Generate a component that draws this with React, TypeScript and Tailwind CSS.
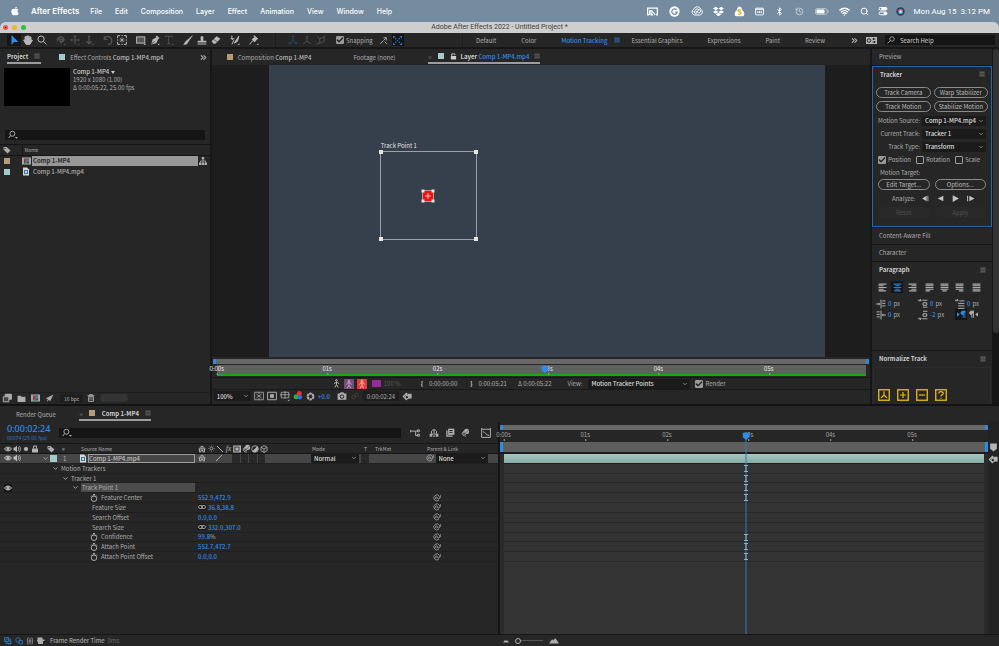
import React, { useState } from 'react';
import { FaApple, FaDropbox } from 'react-icons/fa';
import { Bluetooth, Search, Wifi, History, Check, ChevronDown, ChevronsRight } from 'lucide-react';

interface SvgProps {
  size?: number;
  className?: string;
  children: React.ReactNode;
}

const Svg: React.FC<SvgProps> = ({ size = 10, className = '', children }) => (
  <svg width={size} height={size} viewBox="0 0 16 16" fill="none" stroke="currentColor" strokeWidth={1.6} className={`shrink-0 ${className}`}>
    {children}
  </svg>
);

const MenuLines = ({ className = '' }) => (
  <Svg size={6} className={className}>
    <path d="M1 3h14M1 8h14M1 13h14" strokeWidth={2} />
  </Svg>
);

const FindIcon = () => (
  <Svg size={10}>
    <circle cx="7" cy="6" r="4" />
    <path d="M4 9 1 13" />
    <path d="M11 11h5l-2.500 3z" fill="currentColor" stroke="none" />
  </Svg>
);

const TagIcon = () => (
  <Svg size={8}>
    <path d="M1 2h6l8 7-6 6-8-8z" fill="currentColor" stroke="none" />
    <circle cx="4" cy="5" r="1.300" fill="#262626" stroke="none" />
  </Svg>
);

const EyeIcon = () => (
  <Svg size={8}>
    <path d="M1 8c3-5 11-5 14 0-3 5-11 5-14 0z" strokeWidth={2} />
    <circle cx="8" cy="8" r="2.500" fill="currentColor" />
  </Svg>
);

const SpeakerIcon = () => (
  <Svg size={8}>
    <path d="M1 5h3l4-4v14l-4-4H1z" fill="currentColor" stroke="none" />
    <path d="M10 4c2 2 2 6 0 8M12.500 2c3 3 3 9 0 12" />
  </Svg>
);

const FileIcon = () => (
  <svg width="8" height="9" viewBox="0 0 16 18" className="shrink-0">
    <path d="M2 1h8l4 4v12H2z" fill="#d8d8d8" />
    <path d="M4 6h8v8H4z" fill="#356f96" />
    <circle cx="8" cy="10" r="2.500" fill="#b9dcea" />
  </svg>
);

const CompIcon = () => (
  <svg width="9" height="8" viewBox="0 0 18 16" className="shrink-0">
    <path d="M0 1h18v14H0z" fill="#b4b4b4" />
    <path d="M4 3h10v10H4z" fill="#454545" />
    <path d="M5 4h5v5H5z" fill="#df3131" />
    <circle cx="11.500" cy="7" r="2.500" fill="#3d86d8" />
    <path d="M5 13l3-5 3 5z" fill="#38a35c" />
    <path d="M1 4h2M1 8h2M1 12h2M15 4h2M15 8h2M15 12h2" stroke="#6b6b6b" strokeWidth="1.500" />
  </svg>
);

const StopwatchIcon = () => (
  <Svg size={8}>
    <circle cx="8" cy="9.500" r="5.500" strokeWidth={1.900} />
    <path d="M6 1h4M8 1v3M12 3l2 2M2 5l2-2" strokeWidth={1.900} />
  </Svg>
);

const LinkIcon = () => (
  <svg width="8" height="6" viewBox="0 0 16 12" fill="none" stroke="#9a9a9a" strokeWidth="2" className="shrink-0">
    <rect x="1" y="3" width="8" height="6" rx="3" />
    <rect x="7" y="3" width="8" height="6" rx="3" />
  </svg>
);

const SpiralIcon = () => (
  <Svg size={8}>
    <path d="M12 12a6 6 0 1 1 1-7c1 3 0 6-3 5-2-1 0-4-3-4s-3 4 0 4" strokeWidth={1.500} />
    <path d="M15.300 2v6" strokeWidth={1.300} />
  </Svg>
);

const SyncIcon = () => (
  <Svg size={11}>
    <path d="M7 3 2 8l5 5M7 3v3" strokeWidth={1.800} />
    <path d="M8 4h6v7H8z" fill="currentColor" stroke="none" />
    <circle cx="7" cy="9" r="2.500" fill="#262626" />
  </Svg>
);

const ShyIcon = () => (
  <Svg size={8}>
    <path d="M4 8V5q4-6 8 0v3M1 8h14M3 8v6h3v-3h4v3h3V8M8 3v5" strokeWidth={1.800} />
  </Svg>
);

const BlurIcon = () => (
  <Svg size={9}>
    <circle cx="10" cy="6" r="4.500" fill="currentColor" stroke="none" />
    <path d="M5 5c-2 3 0 7 4 7M2.500 7.500c-1 4 2 7 6 7" />
    <path d="m6 11 8-8" stroke="#262626" strokeWidth={1} />
  </Svg>
);

const Checkbox = ({ label, defaultChecked = false }: { label: string; defaultChecked?: boolean }) => (
  <label className="flex items-center gap-[2px]">
    <span className="relative flex">
      <input
        type="checkbox"
        defaultChecked={defaultChecked}
        className="peer size-2 appearance-none rounded-[1px] border border-[#9a9a9a] checked:bg-[#9a9a9a]"
      />
      <Check size={8} strokeWidth={4} className="pointer-events-none absolute inset-0 hidden text-[#202020] peer-checked:block" />
    </span>
    {label}
  </label>
);

interface DropdownProps {
  label: string;
  options: string[];
  className?: string;
}

const Dropdown: React.FC<DropdownProps> = ({ label, options, className = '' }) => (
  <span className={`relative flex h-[10px] items-center bg-[#1b1b1b] font-medium text-[#dcdcdc] ${className}`}>
    <select aria-label={label} className="h-full w-full appearance-none bg-transparent pl-[3px] outline-none">
      {options.map((option) => (
        <option key={option}>{option}</option>
      ))}
    </select>
    <ChevronDown size={6} strokeWidth={3} className="pointer-events-none absolute right-[2px] text-[#a0a0a0]" />
  </span>
);

const menus = ['File', 'Edit', 'Composition', 'Layer', 'Effect', 'Animation', 'View', 'Window', 'Help'];

const MenuBar = () => (
  <header className="flex h-[22px] items-center bg-[#758ba0] font-['Inter',sans-serif] text-[7px] font-medium text-white">
    <FaApple size={10} className="ml-[10px] mr-[11px]" />
    <nav className="flex items-center gap-[13px]">
      <button className="-mr-[2px] text-[8px] font-semibold">After Effects</button>
      {menus.map((menu) => (
        <button key={menu}>{menu}</button>
      ))}
    </nav>
    <div className="ml-auto flex items-center [&>span]:flex [&>span]:justify-center">
      <span className="w-[22px]">
        <Svg size={11}>
          <path d="M3 13H1V3h14v10h-2M4 13V7h3l5 6" strokeWidth={1.800} />
          <path d="M8 13l-2-3v3z" fill="currentColor" />
        </Svg>
      </span>
      <span className="w-[22px]">
        <Svg size={11}>
          <circle cx="8" cy="8" r="7.500" fill="white" stroke="none" />
          <path d="M11 5.500A4 4 0 1 0 12 9H9" stroke="#758ba0" strokeWidth={1.800} />
        </Svg>
      </span>
      <span className="w-[22px]">
        <svg width="12" height="10" viewBox="0 0 24 20" fill="none" stroke="white" strokeWidth="2">
          <path d="M7 18a6 6 0 0 1-2-11C8 0 17 0 19 6c5 2 5 12-2 12z" />
          <path d="M12 12c-2-4-6-2-6 0s4 4 6 1l2-4c2-3 6-1 5 2s-4 4-6 1M9 8c1-3 6-3 7 0" />
        </svg>
      </span>
      <span className="w-[22px]"><FaDropbox size={11} /></span>
      <span className="w-5">
        <Svg size={11}>
          <path d="M4 6c1-7 7-7 8 0 4 3 4 9 0 9H4c-4 0-4-6 0-9z" fill="white" stroke="none" />
          <path d="M10 6C5 4 5 8 8 8.500s3 4.500-2 3" stroke="#d8b622" strokeWidth={2} />
        </Svg>
      </span>
      <span className="w-5">
        <Svg size={9}>
          <rect x="1" y="2" width="14" height="12" rx="1" />
          <path d="M1 4h14" strokeWidth={2} />
          <path d="M4 9h2M7 9h2M10 9h2" strokeWidth={3} />
        </Svg>
      </span>
      <span className="w-5"><Bluetooth size={9} strokeWidth={2.500} /></span>
      <span className="w-5"><History size={9} strokeWidth={2} className="text-[#d5dce2]" /></span>
      <span className="w-6">
        <svg width="14" height="7" viewBox="0 0 28 14">
          <rect x="1" y="1" width="23" height="12" rx="3" fill="none" stroke="#c7d0d9" strokeWidth="1.500" />
          <rect x="3" y="3" width="16" height="8" rx="1" fill="white" />
          <path d="M26 5v4" stroke="#c7d0d9" strokeWidth="2" />
        </svg>
      </span>
      <span className="w-[22px]"><Wifi size={11} strokeWidth={3} /></span>
      <span className="w-[18px]"><Search size={9} strokeWidth={2.500} /></span>
      <span className="w-[18px]">
        <Svg size={10}>
          <rect x="1" y="1.500" width="14" height="5.500" rx="2.700" fill="white" stroke="none" />
          <circle cx="4" cy="4.200" r="1.600" fill="#758ba0" stroke="none" />
          <rect x="1.800" y="9.500" width="12.500" height="4.500" rx="2.200" />
          <circle cx="11.500" cy="11.800" r="1.800" fill="white" />
        </Svg>
      </span>
      <span className="w-[18px]">
        <Svg size={9}>
          <circle cx="8" cy="8" r="7.500" fill="#31405c" stroke="none" />
          <path d="M3 7c3-5 8-4 10-1-3 4-7 4-10 1z" fill="#e0568c" stroke="none" />
          <path d="M4 10c3 4 7 3 9-1-3-2-6-2-9 1z" fill="#49bfe0" stroke="none" />
          <circle cx="8" cy="8" r="2" fill="white" stroke="none" />
        </Svg>
      </span>
      <time className="ml-1 mr-[9px] whitespace-pre font-['Roboto',sans-serif] text-[8px] font-normal">Mon Aug 15  3:12 PM</time>
    </div>
  </header>
);

interface Tool {
  name: string;
  dim?: boolean;
  icon: React.ReactNode;
}

const corner = <path d="M15 13v3h-3z" fill="currentColor" stroke="none" />;

const toolGroups: Tool[][] = [
  [
    { name: 'Selection', icon: <path d="M4 0v16l4-5h7z" fill="currentColor" stroke="none" /> },
    {
      name: 'Hand',
      icon: <path d="M5 15 1 8c1-1 2 0 3 1L3 3l1.500-.5L6 7V1.500h1.500V7l1-5.500 1.500.3L9.700 7l2-4 1.300.6-1 5 2-1 1 .9-4 6.500z" fill="currentColor" />,
    },
    { name: 'Zoom', icon: <><circle cx="6.500" cy="6.500" r="5" /><path d="m10 10 5 5" /></> },
  ],
  [
    { name: 'Orbit', dim: true, icon: <><path d="M3 10C-1 5 8 1 12 5c3 3-1 7-4 5M5 7h6l-3 5z" strokeWidth={2} />{corner}</> },
    { name: 'Pan', dim: true, icon: <><path d="M8 0v15M1 8h14M6 3l2-2 2 2M3 6 1 8l2 2M13 6l2 2-2 2" />{corner}</> },
    { name: 'Dolly', dim: true, icon: <><path d="M8 1v13M4 10l4 4 4-4M6 2h4" strokeWidth={2} />{corner}</> },
  ],
  [
    { name: 'Rotation', dim: true, icon: <path d="M2 2v5h5M2 6c3-6 12-4 12 3 0 4-3 6-6 6" strokeWidth={2} /> },
    {
      name: 'Pan Behind',
      icon: <><path d="M1 5V1h4M11 1h4v4M15 11v4h-4M5 15H1v-4M7 1h2M7 15h2M1 7v2M15 7v2" /><path d="M8 4v8M4 8h8M5 5l6 6M11 5l-6 6" strokeWidth={1} /></>,
    },
  ],
  [
    { name: 'Rectangle', icon: <><rect x="1" y="3" width="13" height="10" fill="#555" />{corner}</> },
    { name: 'Pen', icon: <><path d="m2 15 2-8 6-3 3 3-3 6z" fill="currentColor" stroke="none" /><path d="m10 2 4 4" strokeWidth={3} /><path d="m2 15 5-5" stroke="#444" />{corner}</> },
    { name: 'Type', dim: true, icon: <><path d="M2 4V2h11v2M7.500 2v12M5 14h5" />{corner}</> },
  ],
  [
    { name: 'Brush', icon: <path d="M15 1 8 11l-2-2zM6 9l2 2c-1 4-4 4-7 4 2-1 2-5 5-6z" fill="currentColor" strokeWidth={1} /> },
    { name: 'Clone Stamp', icon: <path d="M6 7C4 0 12 0 10 7v2h5v3H1V9h5zM1 13.500h14V15H1z" fill="currentColor" stroke="none" /> },
    { name: 'Eraser', icon: <><path d="m1 10 8-8 6 4-8 8H4z" fill="currentColor" stroke="none" /><path d="m4 7 6 4" stroke="#262626" strokeWidth={1} /></> },
  ],
  [
    { name: 'Roto Brush', icon: <><path d="M3 1v5l3 3-3 6M1 6h6" /><path d="m14 2-4 6-3 5 5-3z" fill="currentColor" />{corner}</> },
  ],
  [
    { name: 'Puppet Pin', icon: <><path d="m8 1 6 5-2 1-3 4-4-4 4-3zM6 9l-5 6" fill="currentColor" />{corner}</> },
  ],
];

const workspaces = ['Essential Graphics', 'Expressions', 'Paint', 'Review'];

const Toolbar = () => {
  const [tool, setTool] = useState('Selection');

  return (
    <div className="flex h-4 items-center border-b-2 border-[#161616] bg-[#262626]">
      <div className="ml-[7px] flex gap-[5px]">
        {toolGroups.map((group, index) => (
          <div key={index} className="flex">
            {group.map(({ name, dim, icon }) => (
              <button
                key={name}
                aria-label={name}
                onClick={() => setTool(name)}
                className={`flex h-3 w-[14px] items-center justify-center ${
                  name === tool ? 'bg-[#161616] text-[#2d8ceb]' : dim ? 'text-[#525252]' : 'text-[#b8b8b8]'
                }`}
              >
                <Svg size={10}>{icon}</Svg>
              </button>
            ))}
          </div>
        ))}
      </div>
      <div className="ml-[14px] flex h-full items-center gap-1 border-l border-[#1c1c1c] pl-3 text-[#505050]">
        <Svg size={10} className="text-[#1f4a75]"><path d="M8 1v8l-6 5M8 9l6 5M6 3l2-2 2 2M2 11v3h3M14 11v3h-3" /></Svg>
        <Svg size={10}><path d="M8 2v8l-6 4M8 10l6 4M6 4l2-2 2 2" /></Svg>
        <Svg size={10}><path d="m2 2 4 4v7l7-3V3L6 6M1 14l5-1M13 3l2-2" /></Svg>
      </div>
      <div className="ml-[10px] flex items-center">
        <Checkbox label="Snapping" defaultChecked />
        <Svg size={9} className="ml-[6px]"><path d="m2 14 6-6M8 3h5v5M13 3 8 8M10 10l4 4" /></Svg>
        <span className="ml-1 flex h-3 w-3 items-center justify-center bg-[#151515] text-[#2974bd]">
          <Svg size={9}><path d="M1 4V1h3M12 1h3v3M15 12v3h-3M4 15H1v-3M4 4l2 2M12 4l-2 2M12 12l-2-2M4 12l2-2M7 8h2" strokeWidth={2} /></Svg>
        </span>
      </div>
      <nav className="ml-auto flex h-full items-center gap-[25px] border-l border-[#1c1c1c] pl-[13px]">
        <button>Default</button>
        <button>Color</button>
        <button className="flex items-center gap-[7px] font-medium text-[#2d8ceb]">
          Motion Tracking
          <MenuLines className="-mr-[14px]" />
        </button>
        {workspaces.map((workspace) => (
          <button key={workspace}>{workspace}</button>
        ))}
        <ChevronsRight size={9} strokeWidth={3} />
      </nav>
      <svg width="11" height="7" viewBox="0 0 22 14" className="ml-[7px] shrink-0">
        <path d="M0 0h22v14H0z" fill="#b4b4b4" />
        <circle cx="6" cy="7" r="3.500" fill="none" stroke="#262626" strokeWidth="2" />
        <path d="M13 4h6M13 10h6M15 2v4M17 8v4" stroke="#262626" strokeWidth="2" />
      </svg>
      <label className="ml-2 mr-1 flex h-[10px] w-[110px] items-center bg-[#151515] pl-[2px]">
        <Svg size={8}><circle cx="10" cy="6" r="4.500" /><path d="m7 9-6 6" /></Svg>
        <input aria-label="Search Help" placeholder="Search Help" className="w-full bg-transparent pl-[5px] outline-none placeholder:text-[#d0d0d0]" />
      </label>
    </div>
  );
};

const ProjectPanel = () => (
  <section className="flex w-[21%] flex-col bg-[#262626] pb-px">
    <div className="flex h-4 items-center">
      <button className="ml-[7px] flex h-[14px] items-center gap-[6px] border-b-2 border-[#9c9c9c] font-bold text-[#cfcfcf]">
        Project
        <MenuLines className="mr-px text-[#7c7c7c]" />
      </button>
      <span className="ml-[18px] size-[6px] bg-[#a2cccb]" />
      <button className="ml-[5px] whitespace-nowrap">
        Effect Controls <span className="font-medium text-[#bcbcbc]">Comp 1-MP4.mp4</span>
      </button>
      <ChevronsRight size={9} strokeWidth={3} className="ml-auto mr-[2px] shrink-0" />
    </div>
    <div className="ml-1 mt-[3px] flex h-[38px] gap-[3px]">
      <div className="w-[66px] bg-black" />
      <div className="leading-[8px]">
        <div className="flex items-center gap-[2px] font-medium text-[#cacaca]">
          Comp 1-MP4
          <svg width="4" height="3" viewBox="0 0 4 3" fill="currentColor"><path d="M0 0h4L2 3z" /></svg>
        </div>
        <div>1920 x 1080 (1.00)</div>
        <div>Δ 0:00:05:22, 25.00 fps</div>
      </div>
    </div>
    <label className="mx-[5px] mt-6 flex h-[10px] items-center bg-[#151515] pl-[3px]">
      <FindIcon />
      <input aria-label="Search project" className="w-full bg-transparent outline-none" />
    </label>
    <div className="mt-1 flex-1 border-t border-[#141414]">
      <table className="w-full border-collapse text-left">
        <thead>
          <tr className="h-[10px] border-b border-[#141414] text-[5px]">
            <th className="w-[22px] py-0 pl-[3px]"><TagIcon /></th>
            <th className="border-l border-[#161616] py-0 pl-[2px] font-normal" colSpan={2}>Name</th>
            <th className="w-3 p-0" />
          </tr>
        </thead>
        <tbody>
          <tr className="h-[11px]">
            <td className="p-0 pl-1"><span className="block size-[6px] bg-[#b59c72]" /></td>
            <td className="w-[10px] p-0"><CompIcon /></td>
            <td className="bg-[#989898] py-0 pl-px font-bold text-[#2c2c2c]">Comp 1-MP4</td>
            <td className="p-0 pl-px">
              <Svg size={8}><path d="M5.500 0h5v5h-5zM0 11h5v5H0zM6 11h4v5H6zM11 11h5v5h-5z" fill="currentColor" stroke="none" /><path d="M8 5v6M3 11V8h10v3" /></Svg>
            </td>
          </tr>
          <tr className="h-[11px]">
            <td className="p-0 pl-1"><span className="block size-[6px] bg-[#a2cccb]" /></td>
            <td className="p-0"><FileIcon /></td>
            <td className="py-0 pl-px font-medium">Comp 1-MP4.mp4</td>
            <td className="p-0" />
          </tr>
        </tbody>
      </table>
    </div>
    <div className="flex h-[11px] items-center border-t border-[#1e1e1e] text-[5px] [&>button]:flex [&>button]:w-[14px] [&>button]:justify-center">
      <button aria-label="Interpret footage"><Svg size={10}><path d="M5 2h10v8H5z" fill="#aaa" /><path d="M2 6h9v8H2z" fill="#444" /></Svg></button>
      <button aria-label="New folder"><Svg size={9}><path d="M1 3h6l1 2h7v9H1z" fill="currentColor" stroke="none" /></Svg></button>
      <button aria-label="New composition"><CompIcon /></button>
      <button aria-label="Adjust"><Svg size={9}><path d="M15 1 9 13l-2-3-4 4 2-5-4-1z" fill="currentColor" stroke="none" /></Svg></button>
      <span className="ml-1 bg-[#1e1e1e] px-1 leading-[9px]">16 bpc</span>
      <button aria-label="Delete" className="ml-px"><Svg size={8}><path d="M1 3h14M5 3V1h6v2M3 5h10v10H3zM6 6v7M10 6v7" /></Svg></button>
      <span className="ml-[2px] h-2 w-7 rounded-full bg-[#343434]" />
    </div>
  </section>
);

const DURATION = 5.88;
const PLAYHEAD = 2.97;
const seconds = [0, 1, 2, 3, 4, 5];
const percent = (time: number) => `${(time / DURATION) * 100}%`;

const TimeLabels = ({ className = '' }) => (
  <>
    {seconds.map((second) => (
      <span
        key={second}
        className={`absolute top-0 -translate-x-1/2 leading-[8px] ${className}`}
        style={{ left: percent(second) }}
      >
        {second === 0 ? '0:00s' : `0${second}s`}
        <i className="absolute left-1/2 top-2 h-[2px] w-px bg-[#a0a0a0]" />
      </span>
    ))}
  </>
);

const PlayheadCap = () => (
  <svg width="7" height="8" viewBox="0 0 14 16" className="absolute top-0 -translate-x-1/2" style={{ left: percent(PLAYHEAD) }}>
    <path d="M0 1q7 3 14 0v9l-7 6-7-6z" fill="#2d8ceb" />
  </svg>
);

const NavigatorBar = ({ className = '' }) => (
  <div className={`flex h-[5px] items-stretch justify-between bg-[#686868] ${className}`}>
    <span className="w-[3px] rounded-l-full bg-[#2d8ceb]" />
    <span className="w-[3px] rounded-r-full bg-[#2d8ceb]" />
  </div>
);

const Handles = ({ size }: { size: string }) => (
  <>
    <i className={`absolute left-0 top-0 -translate-1/2 bg-[#e4e4e4] ${size}`} />
    <i className={`absolute left-full top-0 -translate-1/2 bg-[#e4e4e4] ${size}`} />
    <i className={`absolute left-0 top-full -translate-1/2 bg-[#e4e4e4] ${size}`} />
    <i className={`absolute left-full top-full -translate-1/2 bg-[#e4e4e4] ${size}`} />
  </>
);

const TrackPoint = () => (
  <div className="absolute left-[111px] top-[86px] h-[89px] w-[97px] border border-[#9aa1ab]">
    <span className="absolute -top-[10px] left-0 whitespace-nowrap leading-[8px] text-[#e0e0e0]">Track Point 1</span>
    <Handles size="size-1" />
    <div className="absolute left-1/2 top-1/2 flex size-3 -translate-1/2 items-center justify-center border border-[#c58f8f] bg-[#e81414]">
      <svg width="6" height="6" viewBox="0 0 6 6" stroke="#ffb9b9"><path d="M3 0v6M0 3h6" /></svg>
      <Handles size="size-[3px]" />
    </div>
  </div>
);

const Walker = <path d="M8 5v5l-3 5M8 10l3 5M4 9l2-3h4l2 3" />;

const LayerPanel = () => (
  <section className="flex min-w-0 flex-1 flex-col bg-[#262626] pb-[2px]">
    <div className="flex h-4 items-center">
      <span className="ml-[15px] size-[6px] bg-[#b59c72]" />
      <button className="ml-[5px]">Composition <span className="font-medium text-[#b8b8b8]">Comp 1-MP4</span></button>
      <button className="ml-[42px]">Footage (none)</button>
      <div className="ml-[32px] flex h-[14px] items-center border-b-2 border-[#9c9c9c] font-bold text-[#d0d0d0]">
        <button aria-label="Close layer tab" className="text-[5px] font-normal text-[#8c8c8c]">×</button>
        <span className="ml-[5px] size-[6px] bg-[#a2cccb]" />
        <Svg size={7} className="ml-[6px]"><path d="M2 7h12v8H2z" fill="currentColor" stroke="none" /><path d="M4 7V2h7v3" strokeWidth={2} /></Svg>
        <button className="ml-1">Layer <span className="font-medium text-[#2d8ceb]">Comp 1-MP4.mp4</span></button>
        <MenuLines className="ml-[5px] text-[#7c7c7c]" />
      </div>
    </div>
    <div className="flex flex-1 bg-[#1d1d1d] pl-[57px] pr-[45px]">
      <div className="relative flex-1 bg-[#363f4c]">
        <TrackPoint />
      </div>
    </div>
    <div className="h-5 pt-[2px]">
      <NavigatorBar className="mx-[1px]" />
      <div className="relative ml-[5px] mr-1 mt-px h-[9px] bg-[#606060]">
        <TimeLabels className="text-[#eaeaea]" />
        <PlayheadCap />
      </div>
      <div className="ml-[5px] mr-1 h-[2px] bg-[#12a818]" />
    </div>
    <div className="flex h-3 items-center border-t border-[#191919]">
      <div className="ml-[120px] flex items-center gap-[3px]">
        <Svg size={9} className="text-[#c0c0c0]"><circle cx="8" cy="2.500" r="1.500" />{Walker}</Svg>
        <Svg size={10} className="bg-[#6d5070] text-[#d78fdc]"><circle cx="8" cy="3" r="1.500" />{Walker}</Svg>
        <Svg size={10} className="bg-[#e03a36] text-[#f2b0ae]"><circle cx="8" cy="3" r="1.500" />{Walker}</Svg>
        <span className="ml-[2px] h-[7px] w-[9px] bg-[#962a97]" />
        <span className="text-[#5c5c5c]">100 %</span>
      </div>
      <span className="ml-5 font-bold text-[#d0d0d0]">{'{'}</span>
      <button className="ml-[6px]">0:00:00:00</button>
      <span className="ml-[13px] font-bold text-[#d0d0d0]">{'}'}</span>
      <button className="ml-[6px]">0:00:05:21</button>
      <span className="ml-[11px] whitespace-nowrap">Δ 0:00:05:22</span>
      <span className="ml-4 mr-[6px]">View:</span>
      <Dropdown label="View" options={['Motion Tracker Points', 'Masks', 'Anchor Point Path']} className="mr-[5px] w-[102px]" />
      <Checkbox label="Render" defaultChecked />
    </div>
    <div className="flex h-[13px] items-center border-t border-[#191919]">
      <Dropdown label="Magnification" options={['100%', '50%', '200%']} className="ml-[2px] w-[37px]" />
      <div className="ml-[3px] flex items-center gap-[3px]">
        <Svg size={10}><path d="M1 2h14v12H1zM4 5l8 6M12 5l-8 6M8 2v3M8 11v3" strokeWidth={1.300} /></Svg>
        <Svg size={10}><path d="M1 2h14v12H1z" /><path d="M5 5h6v6H5z" fill="currentColor" stroke="none" /></Svg>
        <Svg size={10}><path d="M2 2h12v9H2zM8 0v12M0 6h16" strokeWidth={1.300} />{corner}</Svg>
        <Svg size={10}>
          <circle cx="5" cy="9" r="4" fill="#2fae48" stroke="none" />
          <circle cx="10" cy="4" r="4" fill="#dd3535" stroke="none" />
          <circle cx="11" cy="10" r="3.500" fill="#4068e0" stroke="none" />
        </Svg>
        <Svg size={9}><circle cx="8" cy="8" r="5" strokeWidth={4} strokeDasharray="4.200 1" /></Svg>
      </div>
      <button className="ml-[3px] font-medium text-[#2d8ceb]">+0.0</button>
      <Svg size={10} className="ml-[7px]"><path d="M1 4h3l2-2h4l2 2h3v10H1z" fill="currentColor" stroke="none" /><circle cx="8" cy="9" r="2.800" stroke="#262626" /></Svg>
      <Svg size={8} className="ml-1 text-[#444]"><circle cx="5" cy="10" r="3.500" /><circle cx="11" cy="6" r="3.500" /></Svg>
      <button className="ml-1 h-[10px] bg-[#1e1e1e] px-1">0:00:02:24</button>
      <span className="ml-[3px]"><SyncIcon /></span>
    </div>
  </section>
);

interface PanelTitleProps {
  title: string;
  open?: boolean;
  height?: string;
}

const PanelTitle: React.FC<PanelTitleProps> = ({ title, open = false, height = 'h-4 pb-px' }) => (
  <h2 className={`flex items-center justify-between px-[7px] ${height} ${open ? 'font-bold text-[#cfcfcf]' : 'font-normal'}`}>
    {title}
    {open && <MenuLines className="mr-[-1px] text-[#8c8c8c]" />}
  </h2>
);

const PillButton = ({ label }: { label: string }) => (
  <button className="h-[11px] flex-1 whitespace-nowrap rounded-full border border-[#8a8a8a] leading-[9px] text-[#bcbcbc]">{label}</button>
);

const sources = [
  { label: 'Motion Source:', options: ['Comp 1-MP4.mp4'] },
  { label: 'Current Track:', options: ['Tracker 1'] },
  { label: 'Track Type:', options: ['Transform', 'Stabilize', 'Raw'] },
];

const transport = [
  { name: 'Analyze 1 frame backward', path: 'M10 3v10L2 8zM11.500 3h1.500v10h-1.500z' },
  { name: 'Analyze backward', path: 'M13 3v10L3 8z' },
  { name: 'Analyze forward', path: 'M3 2v12l11-6z' },
  { name: 'Analyze 1 frame forward', path: 'M6 3v10l9-5zM2 3h1.800v10H2z' },
];

const alignments = [
  ['M1 2h14M1 5h9M1 8h14M1 11h9M1 14h13', 'M1 2h14M4 5h8M1 8h14M4 11h8M2 14h12', 'M1 2h14M6 5h9M1 8h14M6 11h9M2 14h13'],
  [
    'M1 2h14M1 5h14M1 8h14M1 11h14M1 14h8',
    'M1 2h14M1 5h14M1 8h14M1 11h14M4 14h8',
    'M1 2h14M1 5h14M1 8h14M1 11h14M7 14h8',
  ],
  ['M1 2h14M1 5h14M1 8h14M1 11h14M1 14h14'],
];

const indents = [
  { name: 'Indent left', value: '0', path: 'M0 8h6M4 6l2 2-2 2M8 1v14M10 3h5M10 7h5M10 11h5' },
  { name: 'Space before', value: '0', path: 'M0 2h5M3 0l2 2-2 2M7 2h8M8 6h6v4H8zM8 13h7' },
  { name: 'Indent first line', value: '0', path: 'M0 2h5M3 0l2 2-2 2M7 3h8M5 7h10M5 11h10M5 15h10' },
  { name: 'Indent right', value: '0', path: 'M16 8h-6M12 6l-2 2 2 2M8 1v14M1 3h5M1 7h5M1 11h5' },
  { name: 'Space after', value: '-2', path: 'M0 14h5M3 12l2 2-2 2M7 14h8M8 6h6v4H8zM8 2h7' },
];

const nudges = [
  'M8 3v5l-4 4M8 8l4 4',
  'M8 4v8M4 8h8',
  'M4 8h8',
  'M5 6c0-4 6-3 6 0 0 2-3 1-3 4M8 11.500v1.500',
];

const SidePanels = () => (
  <aside className="flex w-[127px] shrink-0">
    <div className="flex w-[120px] flex-col gap-px">
      <section className="bg-[#262626]"><PanelTitle title="Preview" /></section>
      <section className="border border-[#2468ae] bg-[#262626] pb-2">
        <PanelTitle title="Tracker" height="h-[14px]" open />
        <div className="mt-[6px] flex flex-col gap-[3px] px-[3px]">
          <div className="flex gap-[3px]"><PillButton label="Track Camera" /><PillButton label="Warp Stabilizer" /></div>
          <div className="flex gap-[3px]"><PillButton label="Track Motion" /><PillButton label="Stabilize Motion" /></div>
        </div>
        <div className="mt-[2px] px-[5px]">
          {sources.map(({ label, options }) => (
            <div key={label} className="flex h-[13px] items-center justify-end gap-[2px] whitespace-nowrap">
              <span>{label}</span>
              <Dropdown label={label} options={options} className="w-16 shrink-0" />
            </div>
          ))}
          <div className="flex h-[13px] items-center justify-between pr-[6px]">
            <Checkbox label="Position" defaultChecked />
            <Checkbox label="Rotation" />
            <Checkbox label="Scale" />
          </div>
          <div className="flex h-[13px] items-center pl-[2px]">Motion Target:</div>
          <div className="flex gap-[5px]"><PillButton label="Edit Target..." /><PillButton label="Options..." /></div>
          <div className="mt-[2px] flex h-[13px] items-center gap-[6px] pl-[14px]">
            Analyze:
            {transport.map(({ name, path }) => (
              <button key={name} aria-label={name}>
                <Svg size={9} className="text-[#c4c4c4]"><path d={path} fill="currentColor" stroke="none" /></Svg>
              </button>
            ))}
          </div>
          <div className="mt-[2px] flex gap-[5px] text-[#505050]">
            <button disabled className="h-[11px] flex-1 rounded-full bg-[#292929]">Reset</button>
            <button disabled className="h-[11px] flex-1 rounded-full bg-[#292929]">Apply</button>
          </div>
        </div>
      </section>
      <section className="bg-[#262626]"><PanelTitle title="Content-Aware Fill" /></section>
      <section className="bg-[#262626]"><PanelTitle title="Character" /></section>
      <section className="h-[88px] bg-[#262626]">
        <PanelTitle title="Paragraph" open />
        <div className="mt-[3px] flex items-center justify-between pl-1 pr-[10px]">
          {alignments.map((group, groupIndex) => (
            <div key={groupIndex} className="flex gap-[3px]">
              {group.map((path, index) => (
                <button
                  key={path}
                  aria-label={`Alignment ${groupIndex * 3 + index + 1}`}
                  className={`flex size-3 items-center justify-center ${groupIndex === 0 && index === 1 ? 'bg-[#151515] text-[#2d7cc8]' : ''}`}
                >
                  <Svg size={9}><path d={path} strokeWidth={1.800} /></Svg>
                </button>
              ))}
            </div>
          ))}
        </div>
        <div className="mt-[5px] grid grid-cols-[42px_37px_1fr] pl-1">
          {indents.map(({ name, value, path }) => (
            <div key={name} className="flex h-[11px] items-center gap-[2px]">
              <Svg size={10}><path d={path} /></Svg>
              <button aria-label={name} className="font-medium text-[#2d8ceb]">{value}</button>
              px
            </div>
          ))}
          <div className="flex items-center gap-[2px]">
            <button aria-label="Left-to-right" className="flex h-[11px] w-3 items-center justify-center bg-[#151515] text-[#2d8ceb]">
              <Svg size={9}><path d="M0 4v8l5-4z" fill="currentColor" stroke="none" /><path d="M11 2v12M14 2v12M15 2h-5c-4 0-4 6 0 6h1" fill="currentColor" /></Svg>
            </button>
            <button aria-label="Right-to-left">
              <Svg size={9}><path d="M16 4v8l-5-4z" fill="currentColor" stroke="none" /><path d="M5 2v12M8 2v12M9 2H4c-4 0-4 6 0 6h1" fill="currentColor" /></Svg>
            </button>
          </div>
        </div>
      </section>
      <section className="flex-1 bg-[#262626]">
        <PanelTitle title="Normalize Track" open />
        <div className="mx-px flex h-[37px] items-end gap-[7px] border border-b-0 border-[#2d2d2d] px-1">
          {nudges.map((path) => (
            <button key={path} aria-label="Normalize" className="mb-[3px] text-[#e3b91b]">
              <Svg size={12}><rect x="1" y="1" width="14" height="14" strokeWidth={1.800} /><path d={path} /></Svg>
            </button>
          ))}
        </div>
      </section>
    </div>
    <div className="ml-px h-[284px] flex-1 rounded bg-[#333]" />
  </aside>
);

const switchIcons: React.ReactNode[] = [
  <ShyIcon />,
  <Svg size={7}><circle cx="8" cy="8" r="3" /><path d="M8 1v2M8 13v2M1 8h2M13 8h2M3 3l1 1M12 12l1 1M13 3l-1 1M4 12l-1 1" /></Svg>,
  <Svg size={8}><path d="m2 2 12 12" strokeWidth={2} /></Svg>,
  <i className="font-['Liberation_Serif',serif] text-[8px] leading-none">fx</i>,
  <Svg size={8}><path d="M0 1h16v14H0z" fill="currentColor" stroke="none" /><path d="M4 4h8v8H4zM1 4h2M1 8h2M1 12h2" stroke="#262626" /></Svg>,
  <BlurIcon />,
  <Svg size={8}><circle cx="8" cy="8" r="6.500" /><path d="M3.500 12.500A6.500 6.500 0 0 0 12.500 3.500z" fill="currentColor" /></Svg>,
  <Svg size={8}><path d="m8 1 6 3.500v7L8 15l-6-3.500v-7zM2 4.500 8 8l6-3.500M8 8v7" /></Svg>,
];

interface Property {
  name: string;
  indent: string;
  group?: boolean;
  selected?: boolean;
  stopwatch?: boolean;
  linked?: boolean;
  value?: string;
  unit?: string;
  keyed?: boolean;
}

const properties: Property[] = [
  { name: 'Motion Trackers', indent: 'pl-[52px]', group: true, keyed: true },
  { name: 'Tracker 1', indent: 'pl-[62px]', group: true, keyed: true },
  { name: 'Track Point 1', indent: 'pl-[72px]', group: true, selected: true, keyed: true },
  { name: 'Feature Center', indent: 'pl-[90px]', stopwatch: true, value: '552.9,472.9', keyed: true },
  { name: 'Feature Size', indent: 'pl-[92px]', linked: true, value: '36.8,38.8' },
  { name: 'Search Offset', indent: 'pl-[92px]', value: '0.0,0.0' },
  { name: 'Search Size', indent: 'pl-[92px]', linked: true, value: '332.0,307.0' },
  { name: 'Confidence', indent: 'pl-[90px]', stopwatch: true, value: '99.8', unit: '%', keyed: true },
  { name: 'Attach Point', indent: 'pl-[90px]', stopwatch: true, value: '552.7,472.7', keyed: true },
  { name: 'Attach Point Offset', indent: 'pl-[90px]', stopwatch: true, value: '0.0,0.0', keyed: true },
];

const PropertyRow = ({ property }: { property: Property }) => {
  const { name, indent, group, selected, stopwatch, linked, value, unit } = property;

  return (
    <div className="relative flex items-center border-b border-[#202020]">
      {selected && <span className="absolute left-1 flex bg-[#171717] text-[#c0c0c0]"><EyeIcon /></span>}
      <div className={`flex h-full w-[198px] items-center ${indent}`}>
        {group && <ChevronDown size={7} strokeWidth={3} className="mr-[2px] shrink-0" />}
        {stopwatch && <span className="mr-[3px]"><StopwatchIcon /></span>}
        <span className={selected ? 'mr-[3px] h-full flex-1 bg-[#4c4c4c] px-px leading-[9px]' : ''}>{name}</span>
      </div>
      {linked && <span className="mr-[2px] bg-[#181818]"><LinkIcon /></span>}
      {value && <button className="font-medium text-[#2d8ceb]">{value}</button>}
      {unit}
      {!group && <span className="absolute left-[433px]"><SpiralIcon /></span>}
    </div>
  );
};

const LayerList = () => (
  <div className="flex w-1/2 flex-col border-r-2 border-[#161616]">
    <div className="flex h-[21px] items-center">
      <div className="w-[59px] pl-[7px] font-['Noto_Sans',sans-serif] text-[#2d8ceb]">
        <div className="text-[9px] font-medium leading-[10px]">0:00:02:24</div>
        <div className="whitespace-nowrap text-[5px] leading-[8px] text-[#2a76c2]">00074 (25.00 fps)</div>
      </div>
      <label className="flex h-[10px] flex-1 items-center bg-[#151515] pl-[3px]">
        <FindIcon />
        <input aria-label="Search layers" className="w-full bg-transparent outline-none" />
      </label>
      <div className="ml-[9px] mr-[7px] flex items-center gap-[6px]">
        <Svg size={10} className="mr-[3px]"><path d="M1 5h8M9 5v7h3M9 5h3M1 3v4M12 3h3v3h-3zM12 10h3v3h-3z" /></Svg>
        <Svg size={10}><path d="M1 9h14v5H1z" fill="currentColor" stroke="none" /><path d="M4 9V5q4-5 8 0v4M8 3v6" /><path d="M6 14v-3h4v3" stroke="#262626" /></Svg>
        <Svg size={10}><path d="M5 1h10v10H5z" fill="currentColor" stroke="none" /><path d="M3 4v9h9" strokeWidth={2} /><path d="M7 4h5M7 7h5" stroke="#262626" /></Svg>
        <BlurIcon />
        <Svg size={10} className="ml-[5px]"><path d="M1 2h14v13H1zM3 6c4 0 5 6 10 6M1 0v2M15 0v2" /></Svg>
      </div>
    </div>
    <div className="flex h-[11px] items-center border-y border-[#161616] text-[5px]">
      <div className="flex w-[198px] items-center">
        <span className="ml-1 flex w-9 gap-px text-[#b4b4b4]">
          <EyeIcon /><SpeakerIcon />
          <Svg size={8}><circle cx="8" cy="8" r="3.500" fill="currentColor" /></Svg>
          <Svg size={8}><path d="M2 7h12v8H2z" fill="currentColor" stroke="none" /><path d="M5 7V2h6v5" strokeWidth={2} /></Svg>
        </span>
        <span className="ml-[7px]"><TagIcon /></span>
        <span className="ml-[7px] w-[19px]">#</span>
        Source Name
      </div>
      <div className="flex w-[70px] items-center justify-between text-[#b4b4b4]">
        {switchIcons.map((icon, index) => (
          <span key={index} className="flex w-[9px] justify-center">{icon}</span>
        ))}
      </div>
      <span className="ml-11">Mode</span>
      <span className="ml-[39px]">T</span>
      <span className="ml-2">TrkMat</span>
      <span className="ml-9 whitespace-nowrap">Parent &amp; Link</span>
    </div>
    <div className="grid h-[108px] auto-rows-fr">
      <div className="flex items-center border-b border-[#202020] bg-[#464646]">
        <div className="flex h-full w-[198px] items-center">
          <span className="ml-1 flex w-9 gap-px text-[#c0c0c0]"><EyeIcon /><SpeakerIcon /></span>
          <ChevronDown size={7} strokeWidth={3} className="ml-[2px]" />
          <span className="ml-px size-[7px] bg-[#a2cccb]" />
          <span className="ml-[6px] w-4">1</span>
          <FileIcon />
          <span className="ml-px mr-[3px] flex-1 border border-[#a0a0a0] font-medium leading-[7px] text-[#c0c0c0]">Comp 1-MP4.mp4</span>
        </div>
        <ShyIcon />
        <Svg size={8} className="ml-[9px]"><path d="M2 14 14 2" strokeWidth={2} /></Svg>
        <div className="ml-[9px] flex h-full w-[33px] gap-px">
          <i className="flex-1 bg-[#292929]" /><i className="flex-1 bg-[#292929]" /><i className="flex-1 bg-[#292929]" /><i className="flex-1 bg-[#292929]" />
        </div>
        <Dropdown label="Mode" options={['Normal', 'Add', 'Multiply']} className="ml-[46px] w-12" />
        <i className="ml-[2px] h-full w-2 bg-[#292929]" />
        <span className="ml-auto mr-[2px]"><SpiralIcon /></span>
        <Dropdown label="Parent" options={['None']} className="mr-[10px] w-[52px]" />
      </div>
      {properties.map((property) => (
        <PropertyRow key={property.name} property={property} />
      ))}
    </div>
  </div>
);

const TimeGraph = () => (
  <div className="flex flex-1">
    <div className="relative flex flex-1 flex-col pt-[3px]">
      <NavigatorBar />
      <div className="relative mx-1 mt-px h-[11px] text-[#a8a8a8]">
        <TimeLabels />
      </div>
      <div className="flex h-[10px] justify-between bg-[#5e5e5e]">
        <i className="w-[3px] bg-[#2d8ceb]" />
        <i className="w-[3px] bg-[#2d8ceb]" />
      </div>
      <div className="flex-1 border-t-2 border-[#1a1a1a] bg-[#2b2b2b] px-1">
        <div className="h-full bg-[#333]">
          <div className="grid h-[108px] auto-rows-fr">
            <div className="border-b border-[#202020] bg-linear-to-b from-[#a6c7c2] to-[#86aaa4]" />
            {properties.map(({ name, keyed }) => (
              <div key={name} className="relative border-b border-[#292929]">
                {keyed && (
                  <svg width="4" height="7" viewBox="0 0 4 7" className="absolute top-px z-10 -translate-x-1/2" style={{ left: percent(PLAYHEAD) }}>
                    <path d="M0 .5h4M2 0v7M0 6.500h4" stroke="#8fb0d0" fill="none" />
                  </svg>
                )}
              </div>
            ))}
          </div>
        </div>
      </div>
      <div className="pointer-events-none absolute inset-x-1 bottom-0 top-[10px]">
        <i className="absolute inset-y-0 w-px -translate-x-1/2 bg-[#2f78c0]" style={{ left: percent(PLAYHEAD) }} />
        <PlayheadCap />
      </div>
    </div>
    <div className="flex w-[11px] flex-col items-center gap-[2px] bg-[#232323] pt-[21px] text-[#b4b4b4]">
      <Svg size={9}><path d="M2 1h12v9l-6 5-6-5z" fill="currentColor" stroke="none" /></Svg>
      <SyncIcon />
    </div>
  </div>
);

const Timeline = () => (
  <section className="flex flex-1 flex-col border-t-2 border-[#121212] bg-[#262626]">
    <div className="flex h-4 items-center">
      <button className="ml-4">Render Queue</button>
      <div className="ml-[23px] flex h-[14px] items-center border-b-2 border-[#9c9c9c] font-bold text-[#cfcfcf]">
        <button aria-label="Close composition tab" className="text-[5px] font-normal text-[#8c8c8c]">×</button>
        <span className="ml-[5px] size-[6px] bg-[#b59c72]" />
        <button className="ml-[7px]">Comp 1-MP4</button>
        <MenuLines className="ml-[6px] text-[#7c7c7c]" />
      </div>
    </div>
    <div className="flex flex-1">
      <LayerList />
      <TimeGraph />
    </div>
    <footer className="flex h-3 items-center border-t border-[#161616]">
      <div className="flex w-1/2 items-center gap-[3px] pl-1">
        <Svg size={8} className="text-[#2d7cc8]"><path d="M1 1h8v8H1zM4 4h9v9H4z" /><circle cx="11" cy="11" r="3.500" /></Svg>
        <Svg size={8} className="text-[#2d7cc8]"><circle cx="6" cy="6" r="4.500" /><path d="M8 7h7v7H8z" /></Svg>
        <Svg size={8}><path d="M5 1C2 1 5 7 2 8c3 1 0 7 3 7M11 1c3 0 0 6 3 7-3 1 0 7-3 7M8 2v12M5 8h6" strokeWidth={1.500} /></Svg>
        <Svg size={8}><path d="M1 1h10v4h4v3h-3v6H2V9H0V6h1z" fill="currentColor" stroke="none" /></Svg>
        <span className="ml-[2px] text-[#bcbcbc]">Frame Render Time</span>
        <span className="text-[#6c6c6c]">0ms</span>
      </div>
      <Svg size={8} className="ml-[2px]"><path d="m2 11 4-5 2 2 2-2 4 5z" fill="currentColor" stroke="none" /></Svg>
      <input
        type="range"
        aria-label="Timeline zoom"
        defaultValue={0}
        className="ml-[5px] h-[6px] w-7 appearance-none bg-[linear-gradient(#555,#555)] bg-[length:100%_1px] bg-center bg-no-repeat [&::-webkit-slider-thumb]:size-[6px] [&::-webkit-slider-thumb]:appearance-none [&::-webkit-slider-thumb]:rounded-full [&::-webkit-slider-thumb]:border [&::-webkit-slider-thumb]:border-[#b0b0b0] [&::-webkit-slider-thumb]:bg-[#262626]"
      />
      <Svg size={10} className="ml-[6px]"><path d="m0 12 5-7 2 2 3-4 6 9z" fill="currentColor" stroke="none" /></Svg>
    </footer>
  </section>
);

const App = () => (
  <div className="flex min-h-screen flex-col bg-[#758ba0] font-['Noto_Sans_CJK_SC',sans-serif] text-[6px] leading-[9px] text-[#adadad]">
    <MenuBar />
    <div className="flex flex-1 flex-col overflow-hidden rounded-t-[5px] bg-[#161616]">
      <div className="relative flex h-[11px] items-center justify-center bg-[#cecece] font-['Roboto',sans-serif] text-[7px] text-[#3e3e3e]">
        <div className="absolute left-[3px] flex gap-1">
          <button aria-label="Close" className="flex size-[5px] items-center justify-center rounded-full bg-[#f2544c]">
            <i className="size-px bg-[#7a0c08]" />
          </button>
          <button aria-label="Minimize" className="size-[5px] rounded-full bg-[#f5b52e]" />
          <button aria-label="Zoom window" className="size-[5px] rounded-full bg-[#2bc23f]" />
        </div>
        <h1>Adobe After Effects 2022 - Untitled Project *</h1>
      </div>
      <Toolbar />
      <main className="flex gap-[2px]">
        <ProjectPanel />
        <LayerPanel />
        <SidePanels />
      </main>
      <Timeline />
    </div>
  </div>
);

export default App;
